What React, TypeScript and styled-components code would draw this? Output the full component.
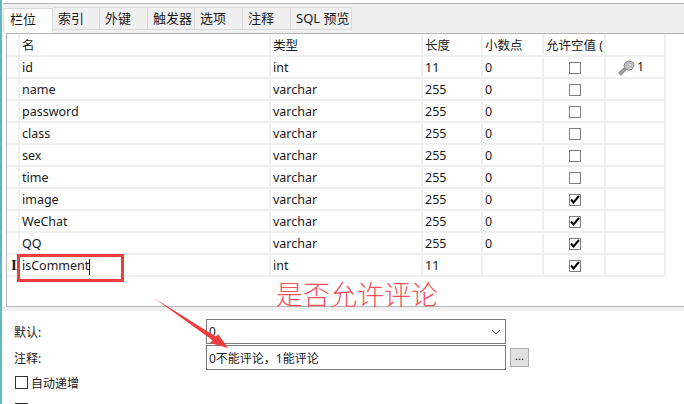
import React from "react";
import styled, { createGlobalStyle } from "styled-components";

const Global = createGlobalStyle`
  html, body { margin: 0; padding: 0; background: #fff; }
  body { font-family: "Noto Sans", "Noto Sans CJK SC", sans-serif; font-size: 13px; color: #1a1a1a; }
  * { box-sizing: border-box; }
`;

const Page = styled.div`
  position: relative;
  width: 684px;
  height: 404px;
  overflow: hidden;
  background: #fff;
  border-left: 2px solid #5fb8c4;
`;
const TopStrip = styled.div`
  height: 4px;
  border-bottom: 1px solid #b4b4b4;
  margin-left: 1px;
`;
const TabBar = styled.div`
  height: 29px;
  background: #f0f0f0;
  display: flex;
  align-items: flex-end;
  padding: 0 0 3px 0;
  margin-left: 1px;
`;
const Tab = styled.div<{ $active?: boolean; $w: number }>`
  width: ${(p) => p.$w}px;
  height: ${(p) => (p.$active ? 25 : 23)}px;
  margin-bottom: ${(p) => (p.$active ? -3 : 0)}px;
  background: ${(p) => (p.$active ? "#fff" : "#f0f0f0")};
  border: 1px solid #d9d9d9;
  border-left-width: ${(p) => (p.$active ? 1 : 0)}px;
  border-bottom-color: ${(p) => (p.$active ? "#fff" : "#d9d9d9")};
  padding: ${(p) => (p.$active ? "0 0 3px 6px" : "0 0 0 5px")};
  display: flex;
  align-items: center;
  font-size: 13px;
  line-height: 1;
  white-space: nowrap;
`;
const GridFrame = styled.div`
  margin-left: 4px;
  height: 274px;
  border: solid #b4b4b4;
  border-width: 1px 0 1px 1px;
  position: relative;
`;
const Row = styled.div<{ $header?: boolean }>`
  display: grid;
  grid-template-columns: 13px 251px 152px 60px 61px 62px 60px;
  height: ${(p) => (p.$header ? 23 : 22)}px;
`;
const Cell = styled.div`
  border-right: 2px solid #f0f0f0;
  border-bottom: 2px solid #f0f0f0;
  padding: 3px 0 0 2px;
  display: flex;
  align-items: center;
  font-size: 12.5px;
  line-height: 1;
  white-space: nowrap;
  overflow: hidden;
`;
const CheckCell = styled(Cell)`
  padding: 1px 0 0 2px;
  justify-content: center;
`;
const Marker = styled(Cell)`
  padding: 1px 0 0 4px;
  overflow: visible;
  font-family: "Liberation Serif", serif;
  font-size: 15px;
  font-weight: 700;
`;
const KeyCell = styled(Cell)`
  padding: 1px 0 0 12px;
  gap: 2px;
`;
const Caret = styled.span`
  display: inline-block;
  width: 1px;
  height: 16px;
  background: #111;
`;
const Box = styled.span<{ $size?: number; $bold?: boolean }>`
  width: ${(p) => p.$size ?? 12}px;
  height: ${(p) => p.$size ?? 12}px;
  border: 1px solid ${(p) => (p.$bold ? "#333" : "#808080")};
  background: #fff;
  display: inline-flex;
  align-items: center;
  justify-content: center;
  flex: none;
`;
const Band = styled.div`
  height: 4px;
  background: #f0f0f0;
  margin-left: 1px;
`;
const Form = styled.div`
  padding: 8px 0 0 12px;
  display: flex;
  flex-direction: column;
`;
const FormRow = styled.div<{ $mb: number }>`
  display: flex;
  align-items: center;
  height: 25px;
  margin-bottom: ${(p) => p.$mb}px;
`;
const Label = styled.div`
  width: 192px;
  font-size: 12px;
`;
const Field = styled.div`
  width: 300px;
  height: 25px;
  border: 1px solid #7a7a7a;
  padding: 0 4px 0 2px;
  display: flex;
  align-items: center;
  justify-content: space-between;
  font-size: 12px;
  white-space: nowrap;
`;
const DotsButton = styled.div`
  width: 19px;
  height: 19px;
  margin: 0 0 1px 4px;
  border: 1px solid #adadad;
  background: #e1e1e1;
  font-size: 11px;
  line-height: 14px;
  text-align: center;
`;
const Check = styled.div<{ $mb?: number }>`
  display: flex;
  align-items: center;
  gap: 3px;
  height: 13px;
  margin: 0 0 ${(p) => p.$mb ?? 0}px 1px;
  font-size: 12px;
  white-space: nowrap;
`;
const RedBox = styled.div`
  position: absolute;
  left: 15px;
  top: 254px;
  width: 107px;
  height: 28px;
  border: 3px solid #f03c3c;
`;
const RedText = styled.div`
  position: absolute;
  left: 274px;
  top: 277px;
  font-family: "Noto Sans CJK SC", sans-serif;
  font-weight: 300;
  font-size: 27px;
  line-height: 34px;
  color: #f4525a;
  white-space: nowrap;
`;
const ArrowSvg = styled.svg`
  position: absolute;
  left: -2px;
  top: 0;
`;

const CheckMark = () => (
  <svg width="10" height="9" viewBox="0 0 10 9">
    <path d="M1 4.5 L3.5 7.5 L9 1" fill="none" stroke="#000" strokeWidth="2" />
  </svg>
);

const Key = () => (
  <svg width="17" height="16" viewBox="0 0 17 16">
    <path d="M0.8 12.6 L2.6 15.2 L4 14.6 L4.4 13.4 L5.6 13 L6 11.8 L8.4 10 L6.2 7.8 Z" fill="#a2a2a2" stroke="#7c7c7c" strokeWidth="0.8" strokeLinejoin="round" />
    <path d="M7 3 L11 0.8 L15.6 2.6 L16 5.6 L14 9.2 L10.4 10.4 L7.4 8.8 L6 6 Z" fill="#c4c4c4" stroke="#858585" strokeLinejoin="round" />
    <path d="M10 3.4 L12.6 3 L13.6 4.4 L12.4 6.2 L10.4 5.6 Z" fill="#ececec" stroke="#979797" strokeWidth="0.7" />
  </svg>
);

const rows: [string, string, string, string, boolean][] = [
  ["id", "int", "11", "0", false],
  ["name", "varchar", "255", "0", false],
  ["password", "varchar", "255", "0", false],
  ["class", "varchar", "255", "0", false],
  ["sex", "varchar", "255", "0", false],
  ["time", "varchar", "255", "0", false],
  ["image", "varchar", "255", "0", true],
  ["WeChat", "varchar", "255", "0", true],
  ["QQ", "varchar", "255", "0", true],
  ["isComment", "int", "11", "", true],
];

const tabs: [string, number][] = [
  ["索引", 47],
  ["外键", 48],
  ["触发器", 47],
  ["选项", 48],
  ["注释", 48],
  ["SQL 预览", 61],
];

export default function App() {
  return (
    <Page>
      <Global />
      <TopStrip />
      <TabBar>
        <Tab $active $w={50}>栏位</Tab>
        {tabs.map(([t, w]) => (
          <Tab key={t} $w={w}>{t}</Tab>
        ))}
      </TabBar>
      <GridFrame>
        <Row $header>
          <Marker />
          <Cell>名</Cell>
          <Cell>类型</Cell>
          <Cell>长度</Cell>
          <Cell>小数点</Cell>
          <Cell>允许空值 (</Cell>
          <Cell />
        </Row>
        {rows.map(([name, type, len, dec, nul], i) => (
          <Row key={name}>
            <Marker>{i === 9 ? "I" : ""}</Marker>
            <Cell>
              {name}
              {i === 9 && <Caret />}
            </Cell>
            <Cell>{type}</Cell>
            <Cell>{len}</Cell>
            <Cell>{dec}</Cell>
            <CheckCell>
              <Box>{nul && <CheckMark />}</Box>
            </CheckCell>
            {i === 0 ? (
              <KeyCell>
                <Key />
                1
              </KeyCell>
            ) : (
              <Cell />
            )}
          </Row>
        ))}
      </GridFrame>
      <Band />
      <Form>
        <FormRow $mb={1}>
          <Label>默认:</Label>
          <Field>
            0
            <svg width="10" height="6" viewBox="0 0 10 6">
              <path d="M1 1 L5 5 L9 1" fill="none" stroke="#555" strokeWidth="1" />
            </svg>
          </Field>
        </FormRow>
        <FormRow $mb={6}>
          <Label>注释:</Label>
          <Field>0不能评论，1能评论</Field>
          <DotsButton>...</DotsButton>
        </FormRow>
        <Check $mb={14}>
          <Box $size={13} $bold />
          自动递增
        </Check>
        <Check>
          <Box $size={13} $bold />
          无符号
        </Check>
      </Form>
      <RedBox />
      <RedText>是否允许评论</RedText>
      <ArrowSvg width="684" height="404" viewBox="0 0 684 404">
        <path d="M154 298 L218 338 L215 342 Z" fill="#f03c3c" />
        <path d="M228 348 L210 343 L218 334 Z" fill="#f03c3c" />
      </ArrowSvg>
    </Page>
  );
}
